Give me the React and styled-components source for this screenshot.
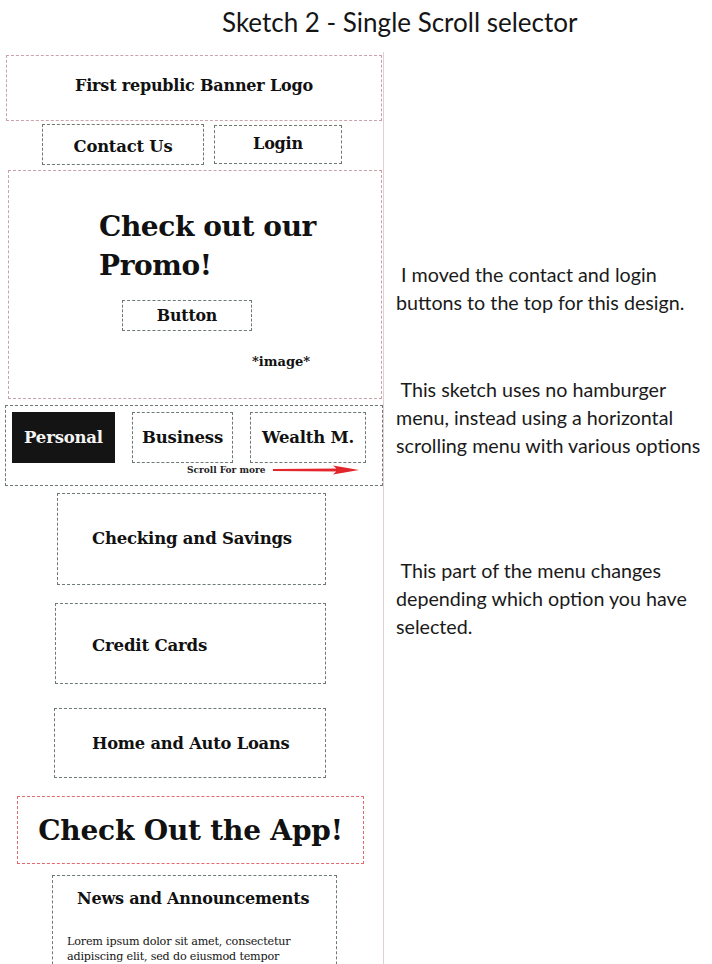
import React from "react";
import styled, { createGlobalStyle } from "styled-components";

const GlobalStyle = createGlobalStyle`
  html, body {
    margin: 0;
    padding: 0;
    background: #ffffff;
  }
  body {
    width: 712px;
    height: 964px;
    overflow: hidden;
  }
`;

const slab = `"DejaVu Serif", "Liberation Serif", serif`;

const Page = styled.div`
  width: 712px;
  height: 964px;
  display: flex;
  flex-direction: column;
  overflow: hidden;
  font-family: Lato, "Open Sans", sans-serif;
  color: #111;
`;

const Title = styled.h1`
  flex-shrink: 0;
  margin: 0;
  height: 52px;
  padding: 5px 0 0 222px;
  box-sizing: border-box;
  font-family: Lato, sans-serif;
  font-weight: 400;
  font-size: 26px;
  line-height: 34px;
  color: #151515;
`;

const Columns = styled.div`
  flex: 1;
  min-height: 0;
  display: grid;
  grid-template-columns: 384px 1fr;
`;

const Phone = styled.div`
  border-right: 1px solid #e3cfd3;
  display: flex;
  flex-direction: column;
  align-items: flex-start;
  padding-top: 3px;
`;

const Box = styled.div`
  flex-shrink: 0;
  box-sizing: border-box;
  border: 1px dashed ${p => p.$line || "#6c7a72"};
  width: ${p => p.$w}px;
  height: ${p => p.$h}px;
  margin: ${p => p.$m || "0"};
  display: flex;
  flex-direction: column;
  justify-content: center;
  align-items: ${p => p.$align || "center"};
  padding: ${p => p.$pad || "0"};
  font-family: ${slab};
  font-weight: 700;
  font-size: ${p => p.$size || 16}px;
  letter-spacing: -0.2px;
  white-space: nowrap;
  background: ${p => (p.$dark ? "#141414" : "transparent")};
  color: ${p => (p.$dark ? "#f4f4f4" : "#111")};
`;

const Row = styled.div`
  display: flex;
  gap: ${p => p.$gap}px;
  margin: ${p => p.$m || "0"};
  align-items: flex-start;
`;

const Promo = styled.div`
  flex-shrink: 0;
  box-sizing: border-box;
  width: 374px;
  height: 229px;
  margin: 5px 0 0 8px;
  border: 1px dashed #c9a3aa;
  padding: 36px 0 0 90px;
  display: flex;
  flex-direction: column;
  font-family: ${slab};
  font-weight: 700;
`;

const PromoHeading = styled.div`
  font-size: 28px;
  line-height: 39px;
  letter-spacing: -0.4px;
`;

const ImageNote = styled.div`
  font-size: 13px;
  margin: 23px 0 0 153px;
`;

const Tabs = styled.div`
  flex-shrink: 0;
  box-sizing: border-box;
  width: 378px;
  height: 81px;
  margin: 6px 0 0 5px;
  border: 1px dashed #6c7a72;
  padding: 6px 0 0 6px;
  display: flex;
  flex-direction: column;
`;

const ScrollHint = styled.div`
  display: flex;
  align-items: center;
  gap: 8px;
  margin: 2px 0 0 175px;
  font-family: ${slab};
  font-weight: 700;
  font-size: 9px;
  color: #222;
`;

const News = styled.div`
  flex-shrink: 0;
  box-sizing: border-box;
  width: 285px;
  height: 120px;
  margin: 11px 0 0 52px;
  border: 1px dashed #6c7a72;
  padding: 13px 0 0 14px;
  font-family: ${slab};
`;

const NewsTitle = styled.div`
  font-weight: 700;
  font-size: 16px;
  letter-spacing: -0.2px;
  padding-left: 10px;
`;

const Lorem = styled.p`
  margin: 26px 0 0 0;
  font-weight: 400;
  font-size: 11.2px;
  line-height: 15px;
  letter-spacing: -0.2px;
  color: #151515;
`;

const Notes = styled.div`
  display: flex;
  flex-direction: column;
  padding: 209px 0 0 12px;
`;

const Note = styled.p`
  margin: ${p => p.$top}px 0 0 0;
  font-family: Lato, sans-serif;
  font-size: 19.7px;
  line-height: 28px;
  color: #1a1a1a;
  white-space: pre;
`;

const Arrow = () => (
  <svg width="86" height="10" viewBox="0 0 86 10">
    <path d="M0 4 L66 3.6 L66 6.4 L0 6 Z" fill="#e3262b" />
    <path d="M60 0.5 L86 5 L60 9.5 Q67 5 60 0.5 Z" fill="#e3262b" />
  </svg>
);

export default function App() {
  return (
    <Page>
      <GlobalStyle />
      <Title>Sketch 2 - Single Scroll selector</Title>
      <Columns>
        <Phone>
          <Box $w={376} $h={66} $m="0 0 0 6px" $pad="0 0 6px" $line="#c9a3aa">
            First republic Banner Logo
          </Box>
          <Row $gap={10} $m="3px 0 0 42px">
            <Box $w={162} $h={41} $pad="4px 0 0" $size={16.4}>Contact Us</Box>
            <Box $w={128} $h={39} $pad="0 0 2px" $m="1px 0 0">Login</Box>
          </Row>
          <Promo>
            <PromoHeading>
              Check out our
              <br />
              Promo!
            </PromoHeading>
            <Box $w={130} $h={31} $m="15px 0 0 23px" $size={15.8}>Button</Box>
            <ImageNote>*image*</ImageNote>
          </Promo>
          <Tabs>
            <Row $gap={17}>
              <Box $w={103} $h={51} $dark $line="#141414" $size={16.5}>Personal</Box>
              <Box $w={101} $h={51} $size={16.5}>Business</Box>
              <Box $w={116} $h={51} $size={16.5}>Wealth M.</Box>
            </Row>
            <ScrollHint>
              Scroll For more
              <Arrow />
            </ScrollHint>
          </Tabs>
          <Box $w={269} $h={92} $m="7px 0 0 57px" $align="flex-start" $pad="0 0 2px 34px" $size={16.5}>
            Checking and Savings
          </Box>
          <Box $w={271} $h={81} $m="18px 0 0 55px" $align="flex-start" $pad="3px 0 0 36px" $size={16.6}>
            Credit Cards
          </Box>
          <Box $w={272} $h={70} $m="24px 0 0 54px" $align="flex-start" $pad="0 0 0 37px" $size={16.3}>
            Home and Auto Loans
          </Box>
          <Box $w={347} $h={68} $m="18px 0 0 17px" $line="#e06a70" $size={28}>
            Check Out the App!
          </Box>
          <News>
            <NewsTitle>News and Announcements</NewsTitle>
            <Lorem>
              Lorem ipsum dolor sit amet, consectetur
              <br />
              adipiscing elit, sed do eiusmod tempor
            </Lorem>
          </News>
        </Phone>
        <Notes>
          <Note $top={0}>{" I moved the contact and login\nbuttons to the top for this design."}</Note>
          <Note $top={59}>{" This sketch uses no hamburger\nmenu, instead using a horizontal\nscrolling menu with various options"}</Note>
          <Note $top={97}>{" This part of the menu changes\ndepending which option you have\nselected."}</Note>
        </Notes>
      </Columns>
    </Page>
  );
}
